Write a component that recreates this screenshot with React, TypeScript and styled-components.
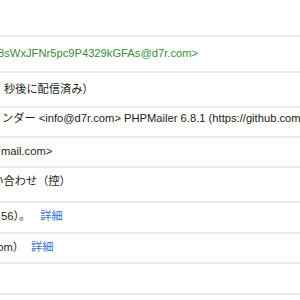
import React from "react";
import styled, { createGlobalStyle } from "styled-components";

const Global = createGlobalStyle`
  html, body { margin: 0; padding: 0; background: #fff; }
  body { width: 300px; height: 300px; overflow: hidden; }
`;

const Page = styled.div`
  width: 300px;
  height: 300px;
  overflow: hidden;
  background: #fff;
  box-sizing: border-box;
  padding-top: 35px;
  font-family: "Liberation Sans", Arial, "Noto Sans CJK JP", sans-serif;
  font-size: 11.2px;
  color: #1c1c1c;
`;

const Table = styled.div`
  display: flex;
  flex-direction: column;
`;

const Row = styled.div<{ $h: number; $pt: number }>`
  height: ${(p) => p.$h}px;
  box-sizing: border-box;
  border-top: 2px solid #eaeaea;
  padding-top: ${(p) => p.$pt}px;
  white-space: nowrap;
  overflow: hidden;
`;

const Value = styled.div<{ $shift: number; $green?: boolean }>`
  margin-left: ${(p) => p.$shift}px;
  line-height: 14px;
  color: ${(p) => (p.$green ? "#378a3c" : "#1c1c1c")};
`;

const Link = styled.a<{ $gap: number }>`
  color: #3a70d6;
  margin-left: ${(p) => p.$gap}px;
  text-decoration: none;
  cursor: pointer;
`;

type R = {
  h: number;
  pt: number;
  shift: number;
  text: string;
  green?: boolean;
  link?: number;
};

const rows: R[] = [
  { h: 36, pt: 9, shift: -2, text: "8sWxJFNr5pc9P4329kGFAs@d7r.com>", green: true },
  { h: 35, pt: 9, shift: 4, text: "秒後に配信済み）" },
  {
    h: 30,
    pt: 3,
    shift: 2,
    text: "ンダー <info@d7r.com> PHPMailer 6.8.1 (https://github.com/PHPMailer/PHPMailer)",
  },
  { h: 30, pt: 6, shift: 1, text: "mail.com>" },
  { h: 35, pt: 6, shift: -30, text: "お問い合わせ（控）" },
  { h: 31, pt: 6, shift: 1, text: "56）。 ", link: 7 },
  { h: 30, pt: 6, shift: -27, text: "d7r.com） ", link: 4 },
  { h: 31, pt: 6, shift: 0, text: "" },
];

export default function App() {
  return (
    <>
      <Global />
      <Page>
        <Table>
          {rows.map((r, i) => (
            <Row key={i} $h={r.h} $pt={r.pt}>
              <Value $shift={r.shift} $green={r.green}>
                {r.text}
                {r.link !== undefined && <Link $gap={r.link}>詳細</Link>}
              </Value>
            </Row>
          ))}
          <Row $h={10} $pt={0} />
        </Table>
      </Page>
    </>
  );
}
